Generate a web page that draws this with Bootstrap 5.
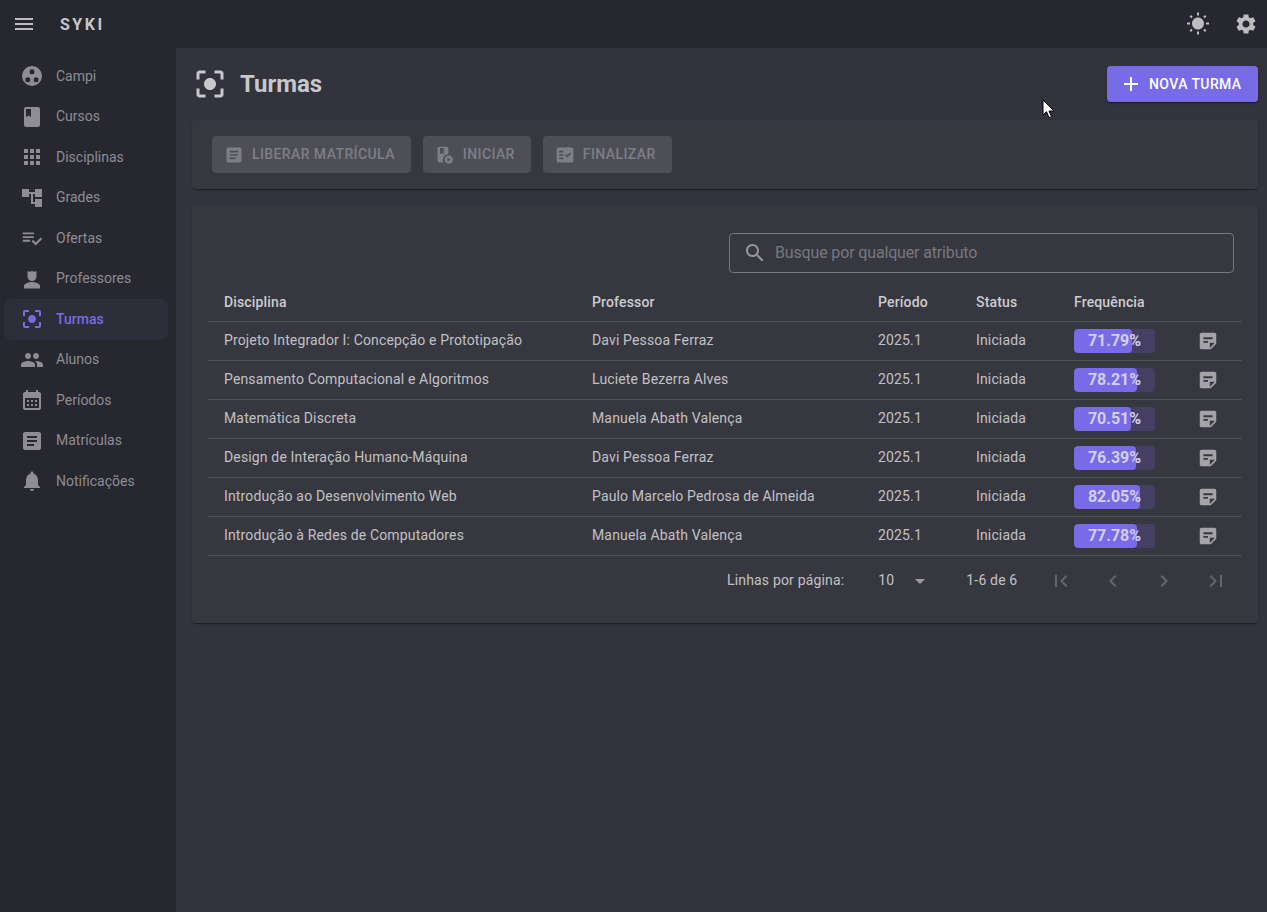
<!DOCTYPE html>
<html lang="pt-BR">
<head>
  <meta charset="UTF-8">
  <title>Turmas - Syki</title>
  <link href="https://cdn.jsdelivr.net/npm/bootstrap@5.3.0/dist/css/bootstrap.min.css" rel="stylesheet">
  <style>
    html, body { height: 100%; }
    body { background: #32333d; color: rgba(255,255,255,.7); font-family: Roboto, "Liberation Sans", sans-serif; font-size: 14px; overflow: hidden; }
    svg { fill: currentColor; display: block; flex: none; }
    .topbar { height: 48px; background: #27272f; padding: 0 9px 0 12px; }
    .topbar .brand { font-size: 16px; font-weight: 700; letter-spacing: 2.5px; color: #c8c8ca; margin-left: 24px; padding-top: 1px; }
    .topbar svg { color: #bdbdbf; }
    .shell { height: 864px; }
    .sidebar { width: 176px; background: #27272f; padding: 0 8px 0 4px; flex: none; }
    .side-link { height: 40.5px; display: flex; align-items: center; gap: 12px; padding-left: 16px; color: #8d8d93; text-decoration: none; border-radius: 8px; }
    .side-link.now { color: #776be7; font-weight: 500; background: #2e2e3a; }
    .pagebody { padding: 18px 9px 0 16px; min-width: 0; }
    .titlebar { height: 36px; margin-bottom: 18px; }
    .titlebar h1 { font-size: 24px; font-weight: 700; margin: 0 0 0 12px; color: #c8c8cb; }
    .titlebar .title-icon { color: #c8c8cb; }
    .btn-new { height: 36px; width: 151px; background: #776be7; color: #fff; font-size: 14px; font-weight: 500; letter-spacing: .4px; white-space: nowrap; border: 0; border-radius: 4px; padding: 0 0 0 12px; gap: 6px; box-shadow: 0 3px 1px -2px rgba(0,0,0,.2), 0 2px 2px rgba(0,0,0,.14), 0 1px 5px rgba(0,0,0,.12); }
    .btn-new:hover { background: #776be7; color: #fff; }
    .panel { background: #373740; border: 0; border-radius: 4px; box-shadow: 0 2px 1px -1px rgba(0,0,0,.2), 0 1px 1px rgba(0,0,0,.14), 0 1px 3px rgba(0,0,0,.12); }
    .panel-actions { height: 69px; padding: 16px 20px; margin-bottom: 16px; }
    .btn-off { height: 37px; background: #4e4e57; color: #7e7e85; font-size: 14px; font-weight: 500; letter-spacing: .4px; border: 0; border-radius: 4px; padding: 0 16px 0 12px; }
    .btn-off:disabled { background: #4e4e57; color: #7e7e85; opacity: 1; }
    .panel-table { height: 418px; padding: 28px 16px 0; }
    .search-box { width: 505px; height: 40px; margin: 0 8px 10px auto; border: 1px solid #77777e; border-radius: 4px; padding: 0 9px 0 13px; color: #96969b; font-size: 16px; letter-spacing: -.15px; }
    .search-box span { color: #77777e; }
    .grid-table { --bs-table-bg: transparent; --bs-table-color: rgba(255,255,255,.7); --bs-table-border-color: #4f4f58; table-layout: fixed; width: 1034px; margin: 0; }
    .grid-table th, .grid-table td { padding: 0 0 0 16px; vertical-align: middle; height: 39px; font-size: 14px; letter-spacing: .15px; }
    .grid-table th { height: 38px; padding-top: 2px; font-weight: 500; color: rgba(255,255,255,.75); }
    .freq { width: 81px; height: 24px; background: #443f63; border-radius: 4px; flex: none; }
    .freq .progress-bar { background: #776be7; border-radius: 4px; }
    .freq-label { position: absolute; inset: 0; text-align: center; line-height: 24px; font-size: 16px; font-weight: 700; letter-spacing: 0; color: #d3d0ec; }
    .note-icon { color: #a3a3a8; margin-left: 42px; }
    .pager { height: 50px; padding-left: 519px; letter-spacing: .17px; color: rgba(255,255,255,.7); }
    .pager .pager-size { margin-left: 34px; width: 30px; }
    .pager .caret { color: #9a9aa0; }
    .pager .pager-count { margin-left: 34px; width: 59px; }
    .pager .pager-icons { margin-left: 24px; color: #65656c; gap: 27.5px; }
    .mouse { position: absolute; left: 1042px; top: 99px; fill: #fff; stroke: #000; stroke-width: 1; }
  </style>
</head>
<body>
<header class="topbar d-flex align-items-center">
  <svg width="24" height="24" viewBox="0 0 24 24"><path d="M3 18h18v-2H3v2zm0-5h18v-2H3v2zm0-7v2h18V6H3z"/></svg>
  <span class="brand">SYKI</span>
  <svg class="ms-auto" width="24" height="24" viewBox="0 0 24 24"><path d="M6.76 4.84l-1.8-1.79-1.41 1.41 1.79 1.79 1.42-1.41zM4 10.5H1v2h3v-2zm9-9.95h-2V3.5h2V.55zm7.45 3.91l-1.41-1.41-1.79 1.79 1.41 1.41 1.79-1.79zm-3.21 13.7l1.79 1.8 1.41-1.41-1.8-1.79-1.4 1.4zM20 10.5v2h3v-2h-3zm-8-5c-3.31 0-6 2.69-6 6s2.69 6 6 6 6-2.69 6-6-2.69-6-6-6zm-1 16.95h2V19.5h-2v2.95zm-7.45-3.91l1.41 1.41 1.79-1.8-1.41-1.41-1.79 1.8z"/></svg>
  <svg class="ms-4" width="24" height="24" viewBox="0 0 24 24"><path d="M19.14 12.94c.04-.3.06-.61.06-.94 0-.32-.02-.64-.07-.94l2.03-1.58c.18-.14.23-.41.12-.61l-1.92-3.32c-.12-.22-.37-.29-.59-.22l-2.39.96c-.5-.38-1.03-.7-1.62-.94l-.36-2.54c-.04-.24-.24-.41-.48-.41h-3.84c-.24 0-.43.17-.47.41l-.36 2.54c-.59.24-1.13.57-1.62.94l-2.39-.96c-.22-.08-.47 0-.59.22L2.74 8.87c-.12.21-.08.47.12.61l2.03 1.58c-.05.3-.09.63-.09.94s.02.64.07.94l-2.03 1.58c-.18.14-.23.41-.12.61l1.92 3.32c.12.22.37.29.59.22l2.39-.96c.5.38 1.03.7 1.62.94l.36 2.54c.05.24.24.41.48.41h3.84c.24 0 .44-.17.47-.41l.36-2.54c.59-.24 1.13-.56 1.62-.94l2.39.96c.22.08.47 0 .59-.22l1.92-3.32c.12-.22.07-.47-.12-.61l-2.01-1.58zM12 15.6c-1.98 0-3.6-1.62-3.6-3.6s1.62-3.6 3.6-3.6 3.6 1.62 3.6 3.6-1.62 3.6-3.6 3.6z"/></svg>
</header>

<div class="shell d-flex">
  <nav class="sidebar pt-2">
    <a class="side-link" href="#"><svg width="24" height="24" viewBox="0 0 24 24"><path fill-rule="evenodd" d="M12 2a10 10 0 1 0 0 20 10 10 0 0 0 0-20zM12 5.200a2.500 2.500 0 1 1 0 5 2.500 2.500 0 0 1 0-5zM7.800 13.300a2.500 2.500 0 1 1 0 5 2.500 2.500 0 0 1 0-5zM16.200 13.300a2.500 2.500 0 1 1 0 5 2.500 2.500 0 0 1 0-5z"/></svg>Campi</a>
    <a class="side-link" href="#"><svg width="24" height="24" viewBox="0 0 24 24"><path d="M18 2H6c-1.100 0-2 .9-2 2v16c0 1.100.9 2 2 2h12c1.100 0 2-.9 2-2V4c0-1.100-.9-2-2-2zM6 4h5v8l-2.500-1.500L6 12V4z"/></svg>Cursos</a>
    <a class="side-link" href="#"><svg width="24" height="24" viewBox="0 0 24 24"><path d="M4 8h4V4H4v4zm6 12h4v-4h-4v4zm-6 0h4v-4H4v4zm0-6h4v-4H4v4zm6 0h4v-4h-4v4zm6-10v4h4V4h-4zm-6 4h4V4h-4v4zm6 6h4v-4h-4v4zm0 6h4v-4h-4v4z"/></svg>Disciplinas</a>
    <a class="side-link" href="#"><svg width="24" height="24" viewBox="0 0 24 24"><path d="M22 11V3h-7v3H9V3H2v8h7V8h2v10h4v3h7v-8h-7v3h-2V8h2v3z"/></svg>Grades</a>
    <a class="side-link" href="#"><svg width="24" height="24" viewBox="-1 -1 26 26"><path d="M14 10H2v2h12v-2zm0-4H2v2h12V6zM2 16h8v-2H2v2zm19.500-4.500L23 13l-6.990 7-4.510-4.500L13 14l3.010 3 5.490-5.500z"/></svg>Ofertas</a>
    <a class="side-link" href="#"><svg width="24" height="24" viewBox="0 0 24 24"><path d="M7.500 4l2.200.8L12 4l2.300.8 2.200-.8v5.500a4.500 4.500 0 0 1-9 0zM12 15c-3 0-8 1.500-8 4v2.500h16V19c0-2.500-5-4-8-4z"/></svg>Professores</a>
    <a class="side-link now" href="#"><svg width="24" height="24" viewBox="0 0 24 24"><path d="M12 8c-2.210 0-4 1.790-4 4s1.790 4 4 4 4-1.790 4-4-1.790-4-4-4zm-7 7H3v4c0 1.100.9 2 2 2h4v-2H5v-4zM5 5h4V3H5c-1.100 0-2 .9-2 2v4h2V5zm14-2h-4v2h4v4h2V5c0-1.100-.9-2-2-2zm0 16h-4v2h4c1.100 0 2-.9 2-2v-4h-2v4z"/></svg>Turmas</a>
    <a class="side-link" href="#"><svg width="24" height="24" viewBox="0 0 24 24"><path d="M16 11c1.660 0 2.990-1.340 2.990-3S17.660 5 16 5c-1.660 0-3 1.340-3 3s1.340 3 3 3zm-8 0c1.660 0 2.990-1.340 2.990-3S9.660 5 8 5C6.340 5 5 6.340 5 8s1.340 3 3 3zm0 2c-2.330 0-7 1.170-7 3.500V19h14v-2.500c0-2.330-4.670-3.500-7-3.500zm8 0c-.29 0-.62.02-.97.05 1.160.84 1.970 1.970 1.970 3.450V19h6v-2.500c0-2.330-4.670-3.500-7-3.500z"/></svg>Alunos</a>
    <a class="side-link" href="#"><svg width="24" height="24" viewBox="0 0 24 24"><path d="M19 4h-1V2h-2v2H8V2H6v2H5c-1.110 0-1.990.9-1.990 2L3 20c0 1.100.89 2 2 2h14c1.100 0 2-.9 2-2V6c0-1.100-.9-2-2-2zm0 16H5V10h14v10zM9 14H7v-2h2v2zm4 0h-2v-2h2v2zm4 0h-2v-2h2v2zm-8 4H7v-2h2v2zm4 0h-2v-2h2v2zm4 0h-2v-2h2v2z"/></svg>Períodos</a>
    <a class="side-link" href="#"><svg width="24" height="24" viewBox="0 0 24 24"><path d="M19 3H5c-1.100 0-2 .9-2 2v14c0 1.100.9 2 2 2h14c1.100 0 2-.9 2-2V5c0-1.100-.9-2-2-2zm-5 14H7v-2h7v2zm3-4H7v-2h10v2zm0-4H7V7h10v2z"/></svg>Matrículas</a>
    <a class="side-link" href="#"><svg width="24" height="24" viewBox="0 0 24 24"><path d="M12 22c1.100 0 2-.9 2-2h-4c0 1.100.89 2 2 2zm6-6v-5c0-3.070-1.640-5.640-4.500-6.320V4c0-.83-.67-1.500-1.500-1.500s-1.500.67-1.500 1.500v.68C7.630 5.360 6 7.920 6 11v5l-2 2v1h16v-1l-2-2z"/></svg>Notificações</a>
  </nav>

  <main class="pagebody flex-grow-1">
    <div class="titlebar d-flex align-items-center">
      <svg class="title-icon" width="36" height="36" viewBox="0 0 24 24"><path d="M12 8c-2.210 0-4 1.790-4 4s1.790 4 4 4 4-1.790 4-4-1.790-4-4-4zm-7 7H3v4c0 1.100.9 2 2 2h4v-2H5v-4zM5 5h4V3H5c-1.100 0-2 .9-2 2v4h2V5zm14-2h-4v2h4v4h2V5c0-1.100-.9-2-2-2zm0 16h-4v2h4c1.100 0 2-.9 2-2v-4h-2v4z"/></svg>
      <h1>Turmas</h1>
      <button class="btn btn-new ms-auto d-flex align-items-center" type="button">
        <svg width="24" height="24" viewBox="0 0 24 24"><path d="M19 13h-6v6h-2v-6H5v-2h6V5h2v6h6v2z"/></svg>NOVA TURMA
      </button>
    </div>

    <div class="card panel panel-actions d-flex flex-row gap-2">
      <button class="btn btn-off d-flex align-items-center gap-2 me-1" type="button" disabled>
        <svg width="20" height="20" viewBox="0 0 24 24"><path d="M19 3H5c-1.100 0-2 .9-2 2v14c0 1.100.9 2 2 2h14c1.100 0 2-.9 2-2V5c0-1.100-.9-2-2-2zm-5 14H7v-2h7v2zm3-4H7v-2h10v2zm0-4H7V7h10v2z"/></svg>LIBERAR MATRÍCULA
      </button>
      <button class="btn btn-off d-flex align-items-center gap-2 me-1" type="button" disabled>
        <svg width="20" height="20" viewBox="0 0 24 24"><path fill-rule="evenodd" d="M5 2h9c1.100 0 2 .9 2 2v7.200a6.500 6.500 0 0 0-5.800 9.800H5c-1.100 0-2-.9-2-2V4c0-1.100.9-2 2-2zM6 3.500V11l2.300-1.400L10.500 11V3.500zM16.500 12.500a5 5 0 1 1 0 10 5 5 0 0 1 0-10zm-1.500 2.600v4.800l3.800-2.400z"/></svg>INICIAR
      </button>
      <button class="btn btn-off d-flex align-items-center gap-2" type="button" disabled>
        <svg width="20" height="20" viewBox="0 0 24 24"><path d="M20 3H4c-1.100 0-2 .9-2 2v14c0 1.100.9 2 2 2h16c1.100 0 2-.9 2-2V5c0-1.100-.9-2-2-2zM10 17H5v-2h5v2zm0-4H5v-2h5v2zm0-4H5V7h5v2zm4.820 6L12 12.160l1.410-1.410 1.410 1.420L17.990 9l1.420 1.420L14.820 15z"/></svg>FINALIZAR
      </button>
    </div>

    <div class="card panel panel-table">
      <div class="search-box d-flex align-items-center gap-2">
        <svg width="24" height="24" viewBox="0 0 24 24"><path d="M15.500 14h-.79l-.28-.27C15.410 12.590 16 11.110 16 9.500 16 5.910 13.090 3 9.500 3S3 5.910 3 9.500 5.910 16 9.500 16c1.610 0 3.090-.59 4.230-1.570l.27.28v.79l5 4.990L20.490 19l-4.990-5zm-6 0C7.010 14 5 11.990 5 9.500S7.010 5 9.500 5 14 7.010 14 9.500 11.990 14 9.500 14z"/></svg>
        <span>Busque por qualquer atributo</span>
      </div>
      <table class="table grid-table">
        <colgroup><col style="width:368px"><col style="width:286px"><col style="width:98px"><col style="width:98px"><col></colgroup>
        <thead><tr><th>Disciplina</th><th>Professor</th><th>Período</th><th>Status</th><th>Frequência</th></tr></thead>
        <tbody id="rows"></tbody>
      </table>
      <div class="pager d-flex align-items-center">
        <span>Linhas por página:</span>
        <span class="pager-size">10</span>
        <svg class="caret" width="24" height="24" viewBox="0 0 24 24"><path d="M7 10l5 5 5-5z"/></svg>
        <span class="pager-count">1-6 de 6</span>
        <div class="pager-icons d-flex">
          <svg width="24" height="24" viewBox="0 0 24 24"><path d="M18.410 16.590L13.820 12l4.590-4.590L17 6l-6 6 6 6zM6 6h2v12H6z"/></svg>
          <svg width="24" height="24" viewBox="0 0 24 24"><path d="M15.410 7.410L14 6l-6 6 6 6 1.410-1.410L10.830 12z"/></svg>
          <svg width="24" height="24" viewBox="0 0 24 24"><path d="M10 6L8.590 7.410 13.170 12l-4.580 4.590L10 18l6-6z"/></svg>
          <svg width="24" height="24" viewBox="0 0 24 24"><path d="M5.590 7.410L10.180 12l-4.590 4.590L7 18l6-6-6-6zM16 6h2v12h-2z"/></svg>
        </div>
      </div>
    </div>
  </main>
</div>

<svg class="mouse" width="14" height="21" viewBox="0 0 14 21"><path d="M1 1v15l3.500-3.300 2.500 6 2.500-1-2.500-5.700h5z"/></svg>

<script src="https://cdn.jsdelivr.net/npm/bootstrap@5.3.0/dist/js/bootstrap.bundle.min.js"></script>
<script>
  const turmas = [
    ["Projeto Integrador I: Concepção e Prototipação", "Davi Pessoa Ferraz", 71.79],
    ["Pensamento Computacional e Algoritmos", "Luciete Bezerra Alves", 78.21],
    ["Matemática Discreta", "Manuela Abath Valença", 70.51],
    ["Design de Interação Humano-Máquina", "Davi Pessoa Ferraz", 76.39],
    ["Introdução ao Desenvolvimento Web", "Paulo Marcelo Pedrosa de Almeida", 82.05],
    ["Introdução à Redes de Computadores", "Manuela Abath Valença", 77.78]
  ];
  document.getElementById("rows").innerHTML = turmas.map(t => `
    <tr>
      <td>${t[0]}</td><td>${t[1]}</td><td>2025.1</td><td>Iniciada</td>
      <td><div class="d-flex align-items-center">
        <div class="progress freq position-relative">
          <div class="progress-bar" style="width:${t[2]}%"></div>
          <div class="freq-label">${t[2]}%</div>
        </div>
        <svg class="note-icon" width="22" height="22" viewBox="0 0 24 24"><path d="M19 3H4.990C3.890 3 3 3.900 3 5l.01 14c0 1.100.89 2 1.990 2h10l6-6V5c0-1.100-.9-2-2-2zM7 8h10v2H7V8zm5 6H7v-2h5v2zm2 5.500V14h5.500L14 19.500z"/></svg>
      </div></td>
    </tr>`).join("");
</script>
</body>
</html>
